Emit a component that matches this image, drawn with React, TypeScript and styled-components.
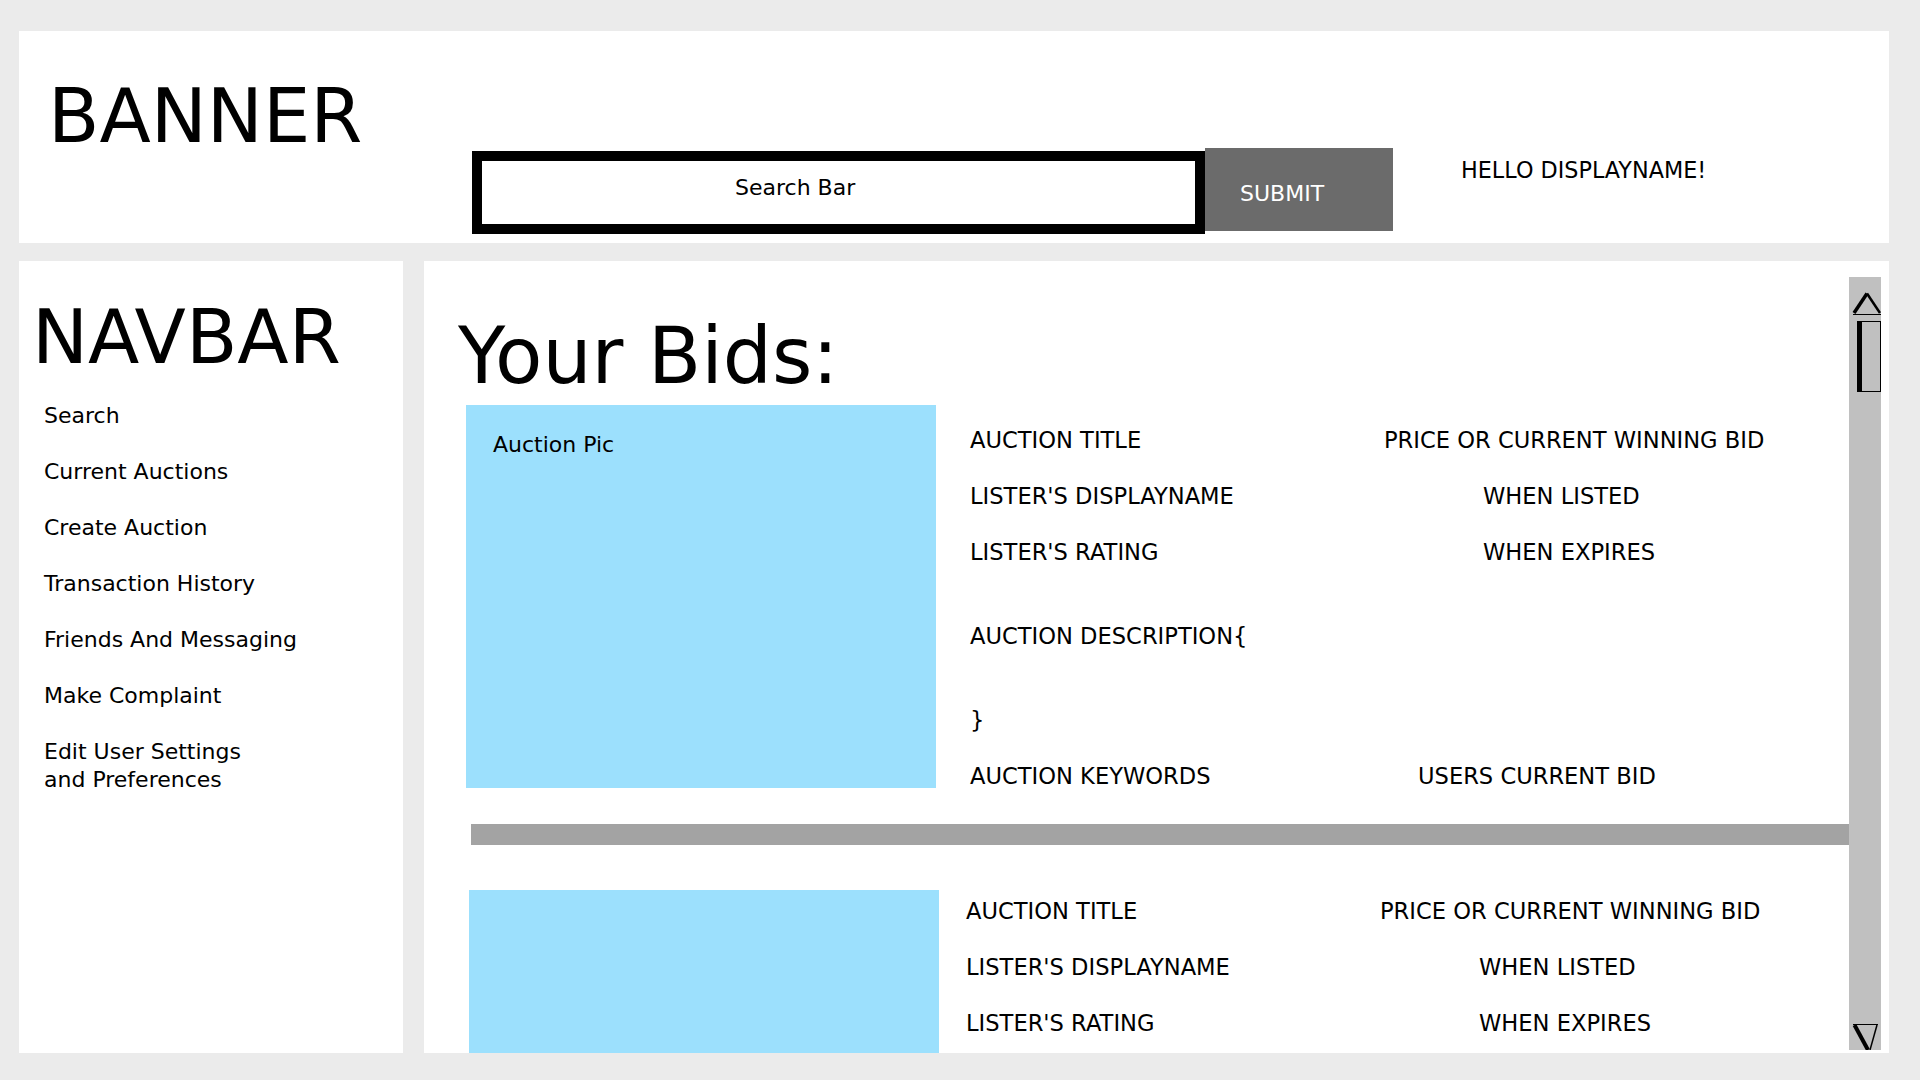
import styled, { createGlobalStyle } from "styled-components";

type Card = {
  pic?: string;
  left: number;
  top: number;
  gap: number;
  infoTop: number;
};

const cards: Card[] = [
  { pic: "Auction Pic", left: 8, top: 5, gap: 34, infoTop: 21 },
  { left: 11, top: 45, gap: 27, infoTop: 7 },
];

const navItems = [
  "Search",
  "Current Auctions",
  "Create Auction",
  "Transaction History",
  "Friends And Messaging",
  "Make Complaint",
];

export default function App() {
  return (
    <>
      <GlobalStyle />
      <Page>
        <Header>
          <Banner>BANNER</Banner>
          <SearchForm onSubmit={(e) => e.preventDefault()}>
            <SearchBox>Search Bar</SearchBox>
            <SubmitButton type="submit">SUBMIT</SubmitButton>
          </SearchForm>
          <Hello>HELLO DISPLAYNAME!</Hello>
        </Header>

        <Body>
          <Sidebar aria-label="Navbar">
            <NavTitle>NAVBAR</NavTitle>
            <NavList>
              {navItems.map((item) => (
                <li key={item}>{item}</li>
              ))}
              <li>
                Edit User Settings
                <br />
                and Preferences
              </li>
            </NavList>
          </Sidebar>

          <Main>
            <Feed>
              <Heading>Your Bids:</Heading>
              {cards.map((c, i) => (
                <div key={i}>
                  {i > 0 && <Divider />}
                  <BidCard $left={c.left} $top={c.top}>
                    <Pic>{c.pic}</Pic>
                    <Info $gap={c.gap} $top={c.infoTop}>
                      <span>AUCTION TITLE</span>
                      <Right $indent={0}>PRICE OR CURRENT WINNING BID</Right>
                      <span>LISTER'S DISPLAYNAME</span>
                      <Right $indent={99}>WHEN LISTED</Right>
                      <span>LISTER'S RATING</span>
                      <Right $indent={99}>WHEN EXPIRES</Right>
                      <Description>
                        <span>AUCTION DESCRIPTION{"{"}</span>
                        <Closing>{"}"}</Closing>
                      </Description>
                      <span>AUCTION KEYWORDS</span>
                      <Right $indent={34}>USERS CURRENT BID</Right>
                    </Info>
                  </BidCard>
                </div>
              ))}
            </Feed>

            <ScrollTrack aria-hidden="true">
              <svg width="32" height="24" viewBox="0 0 32 24">
                <path d="M18 1.5 L5 21" stroke="#000" strokeWidth="3.5" fill="none" />
                <path d="M18 1.5 L31 21" stroke="#000" strokeWidth="2.5" fill="none" />
                <path d="M4 22.5 H32" stroke="#000" strokeWidth="1" />
              </svg>
              <Thumb />
              <DownArrow width="32" height="27" viewBox="0 0 32 27">
                <path d="M4 1.5 H29" stroke="#000" strokeWidth="1" />
                <path d="M5.5 2 L19 27" stroke="#000" strokeWidth="4" fill="none" />
                <path d="M28 2 L21 27" stroke="#000" strokeWidth="1.5" fill="none" />
              </DownArrow>
            </ScrollTrack>
          </Main>
        </Body>
      </Page>
    </>
  );
}

const GlobalStyle = createGlobalStyle`
  html, body {
    margin: 0;
    padding: 0;
  }
  body {
    background: #ebebeb;
    color: #000;
    font-family: "DejaVu Sans", Verdana, sans-serif;
  }
  * { box-sizing: border-box; }
`;

const Page = styled.div`
  width: 1920px;
  height: 1080px;
  padding: 31px 31px 27px 19px;
  display: flex;
  flex-direction: column;
  gap: 18px;
  overflow: hidden;
`;

const Header = styled.header`
  flex: none;
  height: 212px;
  background: #fff;
  display: flex;
  align-items: flex-start;
  padding-left: 29px;
`;

const Banner = styled.div`
  width: 424px;
  margin-top: 48px;
  font-size: 75px;
  line-height: 75px;
`;

const SearchForm = styled.form`
  display: flex;
  align-items: flex-start;
  margin: 0;
`;

const SearchBox = styled.div`
  width: 733px;
  height: 83px;
  margin-top: 120px;
  border: 10px solid #000;
  background: #fff;
  padding: 13px 0 0 253px;
  font-size: 22px;
  line-height: 28px;
`;

const SubmitButton = styled.button`
  width: 188px;
  height: 83px;
  margin-top: 117px;
  border: 0;
  background: #6b6b6b;
  color: #fff;
  display: flex;
  align-items: flex-start;
  justify-content: flex-start;
  padding: 32px 0 0 35px;
  font-family: inherit;
  font-size: 22px;
  line-height: 28px;
  cursor: pointer;
`;

const Hello = styled.div`
  margin: 125px 0 0 68px;
  font-size: 22.3px;
  line-height: 28px;
`;

const Body = styled.div`
  flex: none;
  height: 792px;
  display: flex;
  gap: 21px;
`;

const Sidebar = styled.nav`
  width: 384px;
  flex: none;
  background: #fff;
  padding: 39px 0 0 13px;
`;

const NavTitle = styled.div`
  font-size: 75px;
  line-height: 75px;
`;

const NavList = styled.ul`
  list-style: none;
  margin: 27px 0 0 12px;
  padding: 0;
  display: flex;
  flex-direction: column;
  gap: 28px;
  font-size: 22px;
  line-height: 28px;
`;

const Main = styled.main`
  flex: 1;
  min-width: 0;
  background: #fff;
  display: flex;
  overflow: hidden;
`;

const Feed = styled.div`
  flex: 1;
  min-width: 0;
  padding: 51px 0 0 34px;
`;

const Heading = styled.h1`
  margin: 0;
  font-size: 77.5px;
  line-height: 88px;
  font-weight: normal;
`;

const BidCard = styled.section<{ $left: number; $top: number }>`
  display: flex;
  align-items: flex-start;
  margin-left: ${(p) => p.$left}px;
  margin-top: ${(p) => p.$top}px;
`;

const Pic = styled.div`
  flex: none;
  width: 470px;
  height: 383px;
  background: #9ce0fd;
  padding: 26px 0 0 27px;
  font-size: 22px;
  line-height: 28px;
`;

const Info = styled.div<{ $gap: number; $top: number }>`
  margin-left: ${(p) => p.$gap}px;
  padding-top: ${(p) => p.$top}px;
  display: grid;
  grid-template-columns: 414px auto;
  row-gap: 28px;
  font-size: 22.6px;
  line-height: 28px;
  white-space: nowrap;
`;

const Right = styled.span<{ $indent: number }>`
  margin-left: ${(p) => p.$indent}px;
`;

const Description = styled.div`
  grid-column: 1 / -1;
  margin-top: 28px;
  display: flex;
  flex-direction: column;
`;

const Closing = styled.span`
  margin-top: 56px;
`;

const Divider = styled.div`
  height: 21px;
  margin: 34px -3px 0 13px;
  background: #a3a3a3;
`;

const ScrollTrack = styled.div`
  flex: none;
  width: 32px;
  margin: 16px 8px 3px 0;
  background: #c0c0c0;
  display: flex;
  flex-direction: column;
  svg { display: block; }
  > svg:first-child { margin-top: 15px; }
`;

const Thumb = styled.div`
  width: 24px;
  height: 71px;
  margin: 5px 0 0 8px;
  border: 1px solid #000;
  border-left-width: 5px;
`;

const DownArrow = styled.svg`
  margin-top: auto;
`;
